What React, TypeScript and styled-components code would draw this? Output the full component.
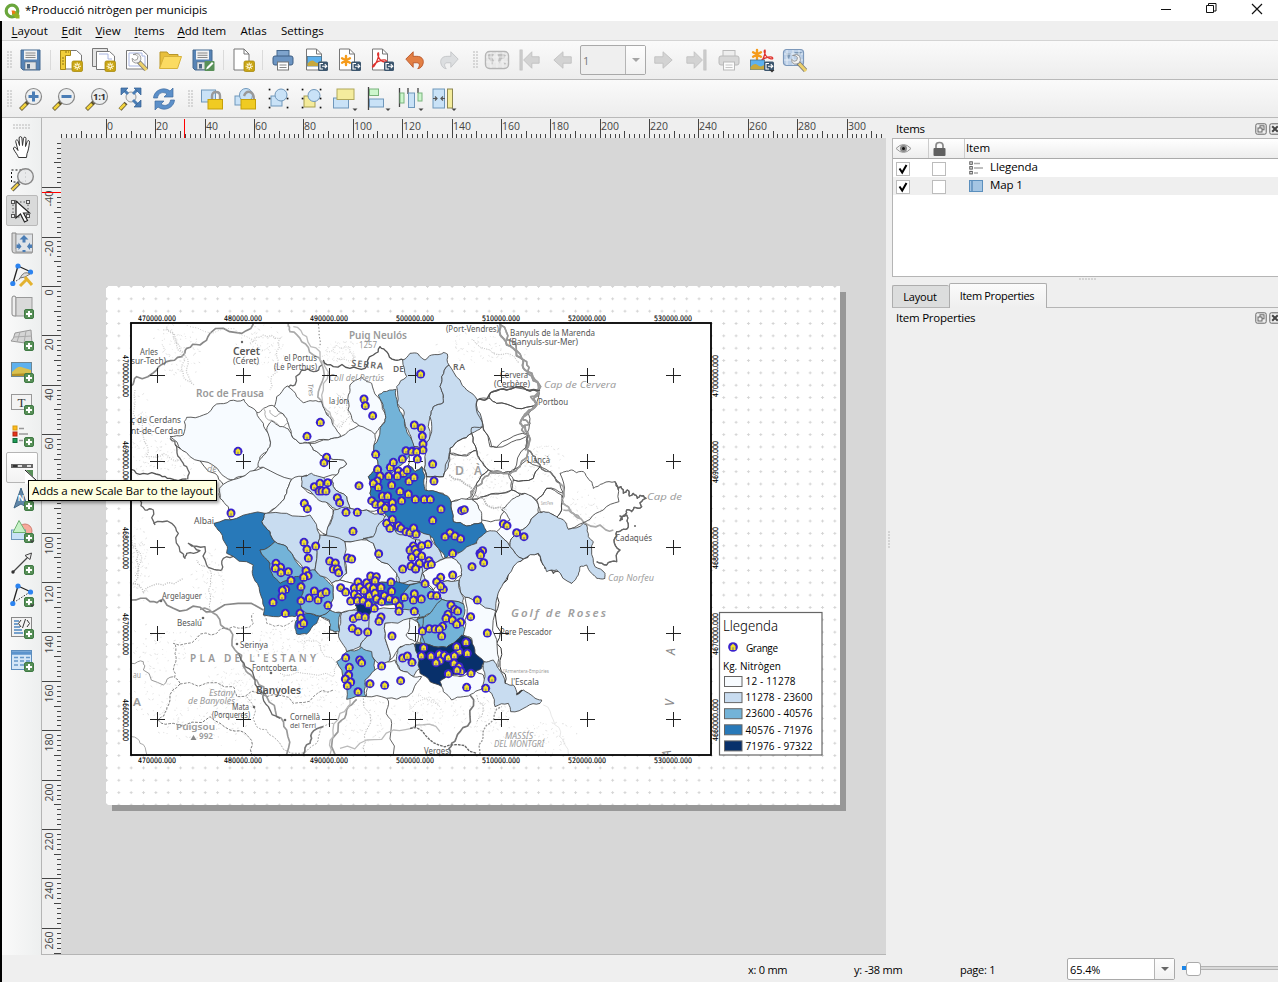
import React from 'react';
import styled, { createGlobalStyle, css } from 'styled-components';

const Global = createGlobalStyle`
  * { box-sizing: border-box; }
  html, body { margin: 0; padding: 0; }
  body { font-family: "Open Sans", "Noto Sans", sans-serif; font-size: 11.5px; color: #000; overflow: hidden; }
`;

/* ---------- shell ---------- */
const Window = styled.div`
  width: 1278px; height: 982px; display: flex; flex-direction: column;
  background: #efefef; border-left: 2px solid #000;
`;
const TitleBar = styled.header`
  height: 21px; flex: none; background: #fff; display: flex; align-items: center;
  margin-left: -2px; padding-left: 4px; gap: 5px;
`;
const Caption = styled.span<{ $sp?: number }>`
  white-space: nowrap; line-height: 14px; letter-spacing: ${p => p.$sp ?? 0}px;
`;
const TitleText = styled(Caption)`position: relative; top: -1px;`;
const WindowButtons = styled.div`
  margin-left: auto; display: flex; align-items: center; height: 18px; padding-right: 15px; gap: 34px;
  svg { display: block; position: relative; top: -2px; }
`;
const MenuBar = styled.nav`
  height: 20px; flex: none; display: flex; align-items: center; border-bottom: 1px solid #d4d4d4; padding-left: 9.5px;
`;
const MenuItem = styled.span<{ $w: number }>`
  width: ${p => p.$w}px; white-space: nowrap; line-height: 18px;
  u { text-underline-offset: 2px; }
`;
const ToolBar = styled.div<{ $h: number }>`
  height: ${p => p.$h}px; flex: none; display: flex; align-items: center; padding-left: 5px;
  background: linear-gradient(#fafafa, #ededed); border-bottom: 1px solid #b9b9b9;
`;
const dots = css`background-image: radial-gradient(circle at 1px 1px, #c6c6c6 0.6px, transparent .9px);`;
const Grip = styled.i<{ $gap?: number }>`
  width: 6px; height: 18px; margin-left: ${p => p.$gap ?? 0}px; margin-right: 1.5px; ${dots} background-size: 3px 3px;
`;
const ToolButton = styled.span<{ $disabled?: boolean }>`
  width: 33.15px; height: 30px; flex: none; display: flex; align-items: center; justify-content: center;
  ${p => p.$disabled && css`opacity: .78; filter: grayscale(1);`}
  svg { display: block; overflow: visible; }
`;
const Divider = styled.i`
  width: 1px; height: 20px; margin: 0 2.8px; background: #dadada; flex: none;
`;
const Combo = styled.div<{ $w: number; $h: number; $off?: boolean }>`
  width: ${p => p.$w}px; height: ${p => p.$h}px; flex: none; display: flex; border: 1px solid #a9a9a9; border-radius: 2px;
  background: ${p => (p.$off ? '#efefef' : '#fff')}; color: ${p => (p.$off ? '#777' : '#000')};
`;
const ComboText = styled.span`flex: 1; padding: 1px 0 0 2px; display: flex; align-items: center; letter-spacing: -.1px; font-size: 11px;`;
const ComboArrow = styled.span<{ $off?: boolean }>`
  width: 20px; border-left: 1px solid #b5b5b5; display: flex; align-items: center; justify-content: center;
  background: linear-gradient(#fdfdfd, #f1f1f1);
  &::after { content: ""; border: 4px solid transparent; border-top: 4px solid ${p => (p.$off ? '#a5a5a5' : '#666')}; border-bottom: 0; }
`;
const Main = styled.div`height: 837px; flex: none; display: flex;`;
const SideBar = styled.aside`
  width: 40px; flex: none; border-right: 1px solid #b5b5b5; background: linear-gradient(90deg, #fafafa, #edefef);
  display: flex; flex-direction: column; align-items: center; padding-top: 6px; position: relative;
`;
const SideGrip = styled.i`width: 17px; height: 6px; margin-bottom: .5px; ${dots} background-size: 3px 3px;`;
const SideButton = styled.span<{ $state?: 'on' | 'hover' }>`
  width: 32px; height: 31px; margin: .54px 0; flex: none; display: flex; align-items: center; justify-content: center; border-radius: 2px;
  border: 1px solid transparent;
  ${p => p.$state === 'on' && css`background: #d9dada; border-color: #b9b9b9;`}
  ${p => p.$state === 'hover' && css`background: linear-gradient(#fff, #f2f2f2); border-color: #b5b5b5;`}
  svg { display: block; overflow: visible; }
`;
const Tooltip = styled.div`
  position: absolute; left: 26px; top: 362px; width: 189px; height: 21px; z-index: 3; white-space: nowrap;
  border: 1px solid #000; background: #ffffe1; padding-left: 3px; line-height: 19px; letter-spacing: -.09px;
  box-shadow: 2px 2px 3px rgba(0,0,0,.4);
`;
const Work = styled.section`width: 844px; flex: none; display: flex; flex-direction: column; border-bottom: 1px solid #b5b5b5;`;
const WorkRow = styled.div`display: flex; svg { display: block; }`;
const Panel = styled.section`flex: 1; min-width: 0; display: flex;`;
const PaneHandle = styled.i`width: 3px; height: 17px; margin: 413px 0 0 2px; flex: none; ${dots} background-size: 3px 3px;`;
const PanelBody = styled.div`flex: 1; padding-left: 1px; display: flex; flex-direction: column; min-width: 0;`;
const DockTitle = styled.div<{ $h: number; $top?: number }>`
  height: ${p => p.$h}px; flex: none; display: flex; align-items: center; justify-content: space-between;
  padding: ${p => p.$top ?? 0}px 0 0 4px;
`;
const DockButtons = styled.span`display: flex; gap: 2px; margin-right: -3px; flex: none; svg { display: block; }`;
const Tree = styled.div`
  height: 139px; flex: none; border: 1px solid #b5b5b5; border-right: 0; background: #fff;
`;
const TreeRow = styled.div<{ $alt?: boolean; $head?: boolean }>`
  height: ${p => (p.$head ? 20 : 18)}px; display: flex; align-items: center;
  background: ${p => (p.$head ? 'linear-gradient(#fff, #ededed)' : p.$alt ? '#efefef' : '#fff')};
  ${p => p.$head && css`border-bottom: 1px solid #aaa;`}
`;
const Cell = styled.span<{ $w?: number; $line?: boolean; $pad: number }>`
  ${p => (p.$w ? `width: ${p.$w}px;` : 'flex: 1;')} height: 100%; padding-left: ${p => p.$pad}px; display: flex; align-items: center; gap: 7px;
  ${p => p.$line && css`border-right: 1px solid #ccc;`}
`;
const RowText = styled.span<{ $low?: boolean }>`line-height: 14px; padding-bottom: ${p => (p.$low ? 1 : 3)}px; letter-spacing: -.1px;`;
const Check = styled.span`
  width: 14px; height: 14px; border: 1px solid #bcbcbc; background: #fff; margin-top: 1px; svg { display: block; }
`;
const Splitter = styled.i`height: 5px; width: 17px; margin: 1px 0 0 187px; flex: none; ${dots} background-size: 3px 6px;`;
const Tabs = styled.div`height: 25px; display: flex; align-items: flex-end; border-bottom: 1px solid #b5b5b5; flex: none;`;
const Tab = styled.span<{ $on?: boolean; $w: number }>`
  width: ${p => p.$w}px; height: ${p => (p.$on ? 25 : 22)}px; line-height: ${p => (p.$on ? 24 : 21)}px; text-align: center;
  border: 1px solid #adadad; border-bottom: 0; border-radius: 2px 2px 0 0; margin-bottom: ${p => (p.$on ? -1 : 0)}px;
  background: ${p => (p.$on ? 'linear-gradient(#fbfbfb, #efefef)' : '#dcdddd')};
  font-size: 11px; letter-spacing: ${p => (p.$on ? -.33 : -.2)}px; padding-right: 2px; white-space: nowrap;
  ${p => !p.$on && css`border-right: 0;`}
`;
const Status = styled.footer`height: 27px; flex: none; display: flex; align-items: center; padding: 1px 0 0 746px;`;
const StatusText = styled.span<{ $w: number }>`width: ${p => p.$w}px; font-size: 11px; margin-top: 1px; letter-spacing: -.25px;`;
const Slider = styled.div`
  margin-left: 7px; margin-top: -2px; flex: 1; height: 4px; border: 1px solid #b3b3b3; border-right: 0; background: #d9d9d9; position: relative;
  &::before { content: ""; position: absolute; left: -1px; top: -1px; width: 8px; height: 4px; background: #1c86e8; }
  &::after { content: ""; position: absolute; left: 3px; top: -5px; width: 13px; height: 12px; border: 1px solid #aaa; border-radius: 3px; background: #fff; }
`;

/* ---------- icons ---------- */
const Svg = ({ s = 24, children }: { s?: number; children: React.ReactNode }) => (
  <svg width={s} height={s} viewBox="0 0 24 24" fill="none">{children}</svg>
);
const Plus = () => (
  <g><rect x="14.5" y="14.5" width="9" height="9" rx="1.5" fill="#589058" stroke="#3f7a44" /><path d="M19 16v6M16 19h6" stroke="#fff" strokeWidth="2" /></g>
);
const Gold = () => (
  <g><rect x="13" y="13" width="10.5" height="10.5" rx="1.5" fill="#c9a514" stroke="#a88a10" strokeWidth=".8" />
    <path d="M18.2 14.5v7.5M14.5 18.2h7.5M15.7 15.7l5 5M20.7 15.7l-5 5" stroke="#fff8d8" strokeWidth="1.1" /><circle cx="18.2" cy="18.2" r="1" fill="#c9a514" /></g>
);
const Export = () => (
  <g><rect x="14" y="13.5" width="10" height="9.5" rx="1.5" fill="#3c566e" /><path d="M19 15.5h-3v5.5h3M18 18.2h4.6M20.8 16.2l2 2-2 2" stroke="#fff" strokeWidth="1.1" /></g>
);
const Page = ({ x = 4 }: { x?: number }) => <g><path d={`M${x} 1h10l5 5v16h-15z`} fill="#fff" stroke="#777" /><path d={`M${x + 10} 1v5h5`} stroke="#777" /></g>;
const Floppy = ({ edit }: { edit?: boolean }) => (
  <Svg><path d="M2 2h19v20H4l-2-2z" fill="#5784b6" stroke="#44688f" /><rect x="5" y="2.500" width="13" height="9" fill="#f2f2f2" />
    <path d="M6.500 5h10M6.500 7.300h10M6.500 9.500h10" stroke="#888" /><rect x="6" y="14" width="11" height="7.500" fill="#dfe3e6" stroke="#5f6f80" strokeWidth=".6" /><rect x="8" y="16" width="3" height="4.500" fill="#4c6784" />
    {edit && <g><rect x="13.500" y="13" width="10" height="10" rx="1" fill="#589058" /><path d="M15 21.500l1-2.500 5-5 1.500 1.500-5 5z" fill="#fff" /></g>}</Svg>
);
const NewLayout = () => (
  <Svg><path d="M1.500 2.500h16l5 4.500v14h-21z" fill="#fff" stroke="#777" /><path d="M1.500 2.500h10v5h-5v14h-5z" fill="#f1ce3a" stroke="#a98a16" /><path d="M6 4h2M9 4h1M3 10h2M3 13h2M3 16h2" stroke="#8b7312" /><Gold /></Svg>
);
const Duplicate = () => (
  <Svg><path d="M0.500 .5h15v18h-15z" fill="#e4e4e4" stroke="#777" /><path d="M4.500 3.500h13l5 4.500v13.500h-18z" fill="#fff" stroke="#777" /><path d="M7 6h9v5h4" stroke="#a9b6e2" /><Gold /></Svg>
);
const Wrench = ({ x = 0, y = 0 }: { x?: number; y?: number }) => (
  <g transform={`translate(${x} ${y})`}><path d="M12 12l8 8.500" stroke="#777" strokeWidth="4.600" /><path d="M13.500 13.500l7 7.500" stroke="#ecd06a" strokeWidth="3" />
    <path d="M7 5.500l3 .2 2 2-.8 2.800-2.600.8-2.500-2q-.5 4 3 4.700 4.500.5 5.700-3.500.5-5-4-6z" fill="#f2f2f2" stroke="#888" strokeWidth=".8" /></g>
);
const Manager = () => (
  <Svg><path d="M1.500 2.500h16l5 4.500v14h-21z" fill="#fff" stroke="#777" /><path d="M4 5h13v3h3v10H4z" stroke="#a9b6e2" /><Wrench x={1} y={1} /></Svg>
);
const Folder = () => (
  <Svg><path d="M2 20V4h7l2 2.500h9V10" fill="#e8bf3b" stroke="#b8962a" /><path d="M1.500 20.500L6 8.500h17.500l-4 12z" fill="#fbdb62" stroke="#d7b23a" /></Svg>
);
const PageAdd = () => <Svg><Page x={3} /><Gold /></Svg>;
const Printer = ({ off }: { off?: boolean }) => (
  <Svg><rect x="6" y="2.500" width="12" height="6" fill={off ? '#ececec' : '#7ea3cc'} stroke={off ? '#aaa' : '#45688e'} /><rect x="2" y="8" width="20" height="9" rx="2" fill={off ? '#d0d0d0' : '#6c95c3'} stroke={off ? '#aaa' : '#3f5f84'} />
    <rect x="6.500" y="14" width="11" height="8" fill="#fff" stroke={off ? '#aaa' : '#777'} /><path d="M8.500 17h7M8.500 19.500h7" stroke={off ? '#bbb' : '#888'} /></Svg>
);
const Pic = ({ x = 2, y = 8 }: { x?: number; y?: number }) => (
  <g transform={`translate(${x} ${y})`}><rect width="14" height="9.500" fill="#5db1ee" stroke="#46708c" strokeWidth=".8" /><path d="M0 7q4-5 7-2t7-.5v5H0z" fill="#c7a83c" /></g>
);
const Flower = ({ x = 8.5, y = 12, r = 5 }: { x?: number; y?: number; r?: number }) => (
  <g transform={`translate(${x} ${y})`} stroke="#f59b1b" strokeWidth="2.400" strokeLinecap="round"><path d={`M0 -${r}V${r}M-${r * .87} -${r * .5}L${r * .87} ${r * .5}M${r * .87} -${r * .5}L-${r * .87} ${r * .5}`} /></g>
);
const ExportImage = () => <Svg><Page x={2.5} /><Pic x={3.500} y={8.500} /><Export /></Svg>;
const ExportSvg = () => <Svg><Page x={2.5} /><Flower x={9} y={12.500} r={4.5} /><Export /></Svg>;
const pdf = 'M10 5c-2 0 0 5 2 7s7 3 6 1-8-1-12 3-1 4 1 0 4-8 3-11z';
const ExportPdf = () => <Svg><Page x={2.5} /><g transform="translate(-1.500 0)"><path d={pdf} stroke="#e0322d" strokeWidth="1.300" /></g><Export /></Svg>;
const undoPath = 'M2 11L10 3v5h4c5.500 0 7.500 3.500 7 7-.5 4-3.500 6.500-6 6.500 2.500-3 2.500-6.500-1-6.500h-4v5z';
const Undo = () => <Svg s={22}><path d={undoPath} fill="#e27f44" stroke="#b9562a" /></Svg>;
const Redo = () => <Svg s={22}><g transform="matrix(-1 0 0 1 24 0)"><path d={undoPath} fill="#dcdee0" stroke="#c3c5c7" /></g></Svg>;
const AtlasMap = () => (
  <Svg><rect x=".5" y="3.500" width="23" height="17" rx="4" fill="#e6e6e6" stroke="#a4a4a4" strokeWidth="1.400" />
    <path d="M3 6.500c2-1 5-1 6 0l-2 3 2 3-2 4.500-2-5-2-2zM12 6.500c3-1 7-1 9 1l-2 3-3 1-1 4-2-2 1-4zM18 14l3 1-1 2z" fill="#b0b0b0" /><path d="M6 4v16M12 4v16M18 4v16M1 9h22M1 14h22" stroke="#f4f4f4" strokeWidth=".8" /></Svg>
);
const Arrow = ({ flip, bar }: { flip?: boolean; bar?: boolean }) => (
  <Svg s={22}><g transform={flip ? 'matrix(-1 0 0 1 24 0)' : undefined}>{bar && <rect x="1" y="1" width="2.500" height="22" fill="#c0c3c5" stroke="#b0b3b6" strokeWidth=".8" />}
    <path d={bar ? 'M5 12l9-9v5.500h8v7h-8V21z' : 'M2 12l10-9v5.500h9v7h-9V21z'} fill="#c9cccd" stroke="#b0b3b6" /></g></Svg>
);
const ExportAtlas = () => <Svg><Flower x={7} y={6.500} r={4.500} /><g transform="translate(5.500 -2.500) scale(.95)"><path d={pdf} stroke="#e0322d" strokeWidth="1.400" /></g><Pic x={.5} y={12} /><Export /><path d="M19.500 22h5l-2.500 2.500z" fill="#333" /></Svg>;
const AtlasSettings = () => (
  <Svg><rect x=".5" y="1.500" width="20" height="16" rx="3" fill="#bcd0e8" stroke="#7c98ba" strokeWidth="1.200" /><path d="M3 5h5l-2 6-2-2zM11 4h8l-3 5z" fill="#7e99b6" /><path d="M4 2v15M10 2v15M16 2v15M1 6h19M1 12h19" stroke="#eef4fa" strokeWidth=".8" /><Wrench x={2.500} y={2} /></Svg>
);
const Lens = ({ children }: { children?: React.ReactNode }) => (
  <Svg><path d="M9 15L1.500 22.500" stroke="#5c5230" strokeWidth="4" /><path d="M7 17l-5 5" stroke="#f2d33c" strokeWidth="2.600" /><circle cx="14.500" cy="9.500" r="8" fill="#eceeef" fillOpacity=".92" stroke="#888" strokeWidth="1.200" />{children}</Svg>
);
const ZoomIn = () => <Lens><path d="M14.500 4.500v10M9.500 9.500h10" stroke="#4a7db5" strokeWidth="3" /></Lens>;
const ZoomOut = () => <Lens><path d="M9.500 9.500h10" stroke="#4a7db5" strokeWidth="3" /></Lens>;
const ZoomOne = () => <Lens><text x="14.500" y="13" fontSize="9.500" fontWeight="700" textAnchor="middle" fill="#333" textLength="13">1:1</text></Lens>;
const ZoomFull = () => (
  <Svg><path d="M8 16l-6 6.500" stroke="#5c5230" strokeWidth="4" /><path d="M7 17l-5 5" stroke="#f2d33c" strokeWidth="2.600" /><circle cx="13" cy="10" r="5" fill="#eee" stroke="#999" />
    <path d="M5 2l5 5M20 2l-5 5M20 18l-5-5" stroke="#4a7db5" strokeWidth="3" /><path d="M3 1h7L3 8zM23 1h-7l7 7zM23 20h-7l7-7z" fill="#4a7db5" stroke="#335f8f" strokeWidth=".7" /></Svg>
);
const Refresh = () => (
  <Svg><path d="M1.500 11C2 3 12-1 18 4l3-3v9h-9l3-3C11 4 6 6 5.500 11z" fill="#5b8fc9" stroke="#3f6c9f" strokeWidth=".7" /><path d="M22.500 13c-.5 8-10.500 12-16.500 7l-3 3v-9h9l-3 3c4 3 9 1 9.500-4z" fill="#5b8fc9" stroke="#3f6c9f" strokeWidth=".7" /></Svg>
);
const Lock = ({ open }: { open?: boolean }) => (
  <Svg>{open ? <g><rect x="2" y="9" width="12" height="9" fill="#c9e2f7" stroke="#6f97bb" /><circle cx="13" cy="8" r="6.500" fill="#c9e2f7" stroke="#6f97bb" /></g> : <rect x="1.500" y="3" width="14" height="12" fill="#c9e2f7" stroke="#6f97bb" />}
    <path d={open ? 'M11 9q2-5 6-4t4 8' : 'M12 13V9q0-4 4-4t4 4v4'} stroke="#999" strokeWidth="2.400" /><rect x="8" y="12.500" width="14.500" height="9.500" fill="#f0cb22" stroke="#c59f0b" /></Svg>
);
const Corners = () => <g fill="#111">{[[1, 1], [19, 1], [1, 19], [19, 19], [1, 10], [19, 10]].map(([x, y]) => <rect key={`${x}-${y}`} x={x + .7} y={y + .7} width="1.700" height="1.700" />)}</g>;
const Group = () => <Svg><rect x="4" y="9" width="11" height="10" fill="#c9e2f7" stroke="#6f97bb" /><circle cx="14" cy="8" r="6" fill="#c9e2f7" stroke="#6f97bb" /><Corners /></Svg>;
const Ungroup = () => <Svg><rect x="4" y="9" width="11" height="11" fill="#f4eb9a" stroke="#a79e50" /><circle cx="14" cy="8.500" r="6" fill="#c9e2f7" stroke="#6f97bb" /><Corners /></Svg>;
const Caret = () => <path d="M19.500 21.500h5l-2.500 2.500z" fill="#444" />;
const Raise = () => <Svg><rect x=".5" y="11" width="15" height="10" fill="#c9e2f7" stroke="#6f97bb" /><rect x="4" y="2" width="17" height="10.500" fill="#f4ec9d" stroke="#b0a75a" /><Caret /></Svg>;
const Align = () => <Svg><path d="M2.500 0v23" stroke="#444" strokeWidth="1.300" /><rect x="3.500" y="2" width="9" height="6.500" fill="#cdf6cd" stroke="#79b37c" /><rect x="3.500" y="12" width="14" height="8" fill="#c9e2f7" stroke="#6f97bb" /><Caret /></Svg>;
const Distribute = () => <Svg><path d="M.5 1v19M9 1v6M19 1v5" stroke="#444" strokeWidth="1.300" /><rect x="1" y="6" width="4" height="10" fill="#cdf6cd" stroke="#79b37c" /><rect x="9.500" y="6" width="6" height="14.500" fill="#c9e2f7" stroke="#6f97bb" /><rect x="19" y="6" width="4" height="8" fill="#cdf6cd" stroke="#79b37c" /><Caret /></Svg>;
const Resize = () => <Svg><rect x="1" y="2" width="11.500" height="19" fill="#c9e2f7" stroke="#6f97bb" /><path d="M1 11.500h4M13 11.500H9M3 9.500l2 2-2 2M11 9.500l-2 2 2 2" stroke="#555" strokeWidth="1.200" /><rect x="15.500" y="2" width="5" height="19" fill="#f4ec9d" stroke="#8c8650" /><Caret /></Svg>;

const Hand = () => (
  <Svg><path d="M8 23c-1-3-3.500-5.500-5-8.500-.5-2 1.500-2.500 2.700-.8L7.500 16 5.200 7c-.3-1.800 1.900-2.200 2.500-.4L9 11 8.600 3.500c0-1.800 2.500-1.900 2.800 0L12 11l1-7.200c.3-1.700 2.600-1.500 2.500.3L15 12l1.700-5c.6-1.600 2.600-1 2.300.7-.5 4-1 8-2.500 11.500L16 23z" fill="#fff" stroke="#333" strokeWidth="1" transform="translate(.5 -.5)" /></Svg>
);
const ZoomTool = () => (
  <Svg><rect x="1.500" y="3" width="14" height="12" stroke="#111" strokeDasharray="2 2" /><path d="M9 16l-7 7" stroke="#555" strokeWidth="4" /><path d="M8 17l-6 6" stroke="#f0cf49" strokeWidth="2.400" /><circle cx="15.500" cy="9.500" r="7.800" fill="#e8e9ea" fillOpacity=".9" stroke="#888" strokeWidth="1.400" /></Svg>
);
const Select = () => (
  <Svg><rect x="3" y="3" width="15" height="15" stroke="#555" strokeDasharray="1.500 2" /><g stroke="#555" fill="#eee"><rect x="1.500" y="1.500" width="3" height="3" /><rect x="16.500" y="1.500" width="3" height="3" /><rect x="1.500" y="15.500" width="3" height="3" /><rect x="16.500" y="15.500" width="3" height="3" /></g>
    <path d="M6 2v17l4.500-4 4 8 3-1.500-4-7.500h6z" fill="#fff" stroke="#222" strokeWidth="1.200" /></Svg>
);
const MoveContent = () => (
  <Svg><path d="M2 2h4v16h16v4H4q-2 0-2-3z" fill="#d7d7d7" stroke="#888" /><rect x="6" y="3" width="16.500" height="18" fill="#dfe3e7" stroke="#999" /><path d="M14 4l4.500 4.500h-3v3h-3v-3h-3zM6.500 13.500h2v-2l3 4-3 3.500v-2h-2zM22 13.500h-2v-2l-3 4 3 3.500v-2h2zM12.500 21v-2h3v2z" fill="#4a7db5" /></Svg>
);
const nodes = (
  <g><path d="M8 3L3 20M8 3l12 5.500" stroke="#222" strokeWidth="1.300" /><path d="M20 9L3 20" stroke="#333" strokeDasharray="1.500 1.500" /><g fill="#2d84f0"><circle cx="8" cy="3" r="2.600" /><circle cx="20.500" cy="9" r="2.600" /><circle cx="2.800" cy="20.500" r="2.600" /></g></g>
);
const EditNodes = () => <Svg>{nodes}<path d="M10 15q4-8 10-4l-5 3z" fill="#ddd" stroke="#777" /><path d="M15 14l7 8M17 16l-7 7" stroke="#e3b22f" strokeWidth="3" /></Svg>;
const AddMap = () => <Svg><path d="M2 3q0-2 2-2t2 2v18H4q-2 0-2-2z" fill="#eee" stroke="#888" /><rect x="6" y="2.500" width="16" height="18.500" fill="#d9d9d9" stroke="#999" /><Plus /></Svg>;
const Add3d = () => <Svg><path d="M5 6l16-3 1 14-21-3q3-2 4-8z" fill="#d5d5d5" stroke="#999" /><path d="M10 5l-3 10M16 4l-2 12M4 10l18-1" stroke="#aaa" /><Plus /></Svg>;
const AddPicture = () => <Svg><rect x="1.500" y="3.500" width="20" height="14" fill="#5db1ee" stroke="#6d8794" /><path d="M2 13q6-6 9-5t10 3v6H2z" fill="#d9c04e" /><path d="M2 15l19-1v3H2z" fill="#b29126" /><Plus /></Svg>;
const AddLabel = () => <Svg><rect x="1.500" y="3.500" width="20" height="15" fill="#f3f3f3" stroke="#999" /><text x="11.500" y="15.500" textAnchor="middle" fontFamily="Liberation Serif, serif" fontSize="13" fill="#333">T</text><Plus /></Svg>;
const AddLegend = () => <Svg><rect x="3" y="3" width="4" height="4" fill="#fdbb1c" stroke="#d89c10" /><rect x="3" y="9" width="4" height="4" fill="#e7341c" stroke="#b1260f" /><rect x="3" y="15.500" width="4" height="4" fill="#1f9b56" stroke="#116b38" /><path d="M9 5.500h5M9 11h9M9 17.500h4" stroke="#999" strokeWidth="1.600" /><Plus /></Svg>;
const AddScale = () => <Svg><rect x="1" y="9" width="22" height="4" fill="#666" /><rect x="3" y="10" width="4" height="2" fill="#333" /><rect x="8" y="10" width="4" height="2" fill="#ddd" /><rect x="17" y="10" width="4" height="2" fill="#ddd" /><path d="M16 15h7v7z" fill="#589058" /><path d="M15 15v14l14-2z" fill="#fff" /><path d="M15 15l12 11" stroke="#111" /></Svg>;
const AddNorth = () => <Svg><path d="M11 1l7 20-7-4-7 4z" fill="#5f86a8" stroke="#426785" /><text x="11" y="14" fontSize="8" fontWeight="700" fill="#fff" textAnchor="middle">N</text><Plus /></Svg>;
const AddShape = () => <Svg><circle cx="15" cy="12" r="7" fill="#f7a99b" stroke="#cf7f73" /><rect x="1.500" y="11" width="14" height="9.500" fill="#c9e2f7" stroke="#6f97bb" /><path d="M9 1.500l7 12H3z" fill="#c6f2c6" stroke="#6eb072" /><Plus /><Caret /></Svg>;
const AddArrow = () => <Svg><path d="M3 21L18 6" stroke="#444" strokeWidth="1.200" /><path d="M21.500 2l-1.500 6.500-5-4z" fill="#eee" stroke="#444" /><circle cx="3" cy="21" r="1.700" fill="#333" /><Plus /></Svg>;
const AddNode = () => <Svg>{nodes}<Plus /><Caret /></Svg>;
const AddHtml = () => <Svg><rect x="1.500" y="2.500" width="20" height="19" fill="#f3f3f3" stroke="#888" /><path d="M4 6h5M4 9h4M4 12h6M4 15h8M4 18h9" stroke="#4d86c0" strokeWidth="1.500" /><path d="M11 5L8.500 8.500 11 12M17 5l2.500 3.500L17 12M15.500 4l-3 9" stroke="#333" /><Plus /></Svg>;
const AddTable = () => <Svg><rect x="1.500" y="2.500" width="20" height="19" fill="#d4e6f7" stroke="#5c8dbd" /><path d="M2 5h19" stroke="#5b93cc" strokeWidth="3.500" /><path d="M4 9.500h4M10 9.500h4M16 9.500h4M4 13h4M10 13h4M16 13h4M4 17h4M10 17h4" stroke="#6498c9" strokeWidth="1.500" /><Plus /></Svg>;

const Logo = () => (
  <svg width="16" height="16" viewBox="0 0 16 16"><circle cx="8" cy="8" r="5.800" fill="none" stroke="#6aa63c" strokeWidth="3.200" /><path d="M8 8h3.500l4 4v3.500H12L8 11.500z" fill="#93b023" /><path d="M7.500 7.500h3l1 3-3 .5z" fill="#ee7913" /></svg>
);

/* ---------- rulers ---------- */
const MM = 2.469;
const range = (a: number, b: number, s: number) => { const r: number[] = []; for (let i = a; i <= b; i += s) r.push(i); return r; };

const HRuler = () => (
  <svg width="844" height="20" viewBox="42 118 844 20" shapeRendering="crispEdges">
    <rect x="42" y="118" width="844" height="20" fill="#efefef" />
    {range(-18, 314, 2).map(v => {
      const x = Math.floor(106.4 + v * MM);
      const top = v % 20 === 0 ? 119 : v % 10 === 0 ? 131 : 134;
      return <rect key={v} x={x} y={top} width="1" height={138 - top} fill="#444" />;
    })}
    {range(0, 300, 20).map(v => (
      <text key={v} x={Math.floor(106.4 + v * MM) + 1} y="130" fontSize="11.500" fill="#444" textLength={String(v).length * 6} lengthAdjust="spacingAndGlyphs">{v}</text>
    ))}
    <rect x="184" y="119" width="1" height="19" fill="#f00" />
  </svg>
);
const VRuler = () => (
  <svg width="19" height="816" viewBox="42 138 19 816" shapeRendering="crispEdges">
    <rect x="42" y="138" width="19" height="816" fill="#efefef" />
    {range(-58, 270, 2).map(v => {
      const y = Math.floor(286.4 + v * MM);
      const left = v % 20 === 0 ? 42 : v % 10 === 0 ? 54 : 57;
      return <rect key={v} x={left} y={y} width={61 - left} height="1" fill="#444" />;
    })}
    {range(-40, 260, 20).map(v => (
      <text key={v} transform={`translate(53 ${Math.floor(286.4 + v * MM) + 3.500}) rotate(-90)`} textAnchor="end" fontSize="11.500" fill="#444"
        textLength={String(Math.abs(v)).length * 6 + (v < 0 ? 4 : 0)} lengthAdjust="spacingAndGlyphs">{v}</text>
    ))}
    <rect x="42" y="192" width="19" height="1" fill="#f00" />
  </svg>
);

/* ---------- map ---------- */
type Sheet = 'nw' | 'ne' | 'sw' | 'se';
const origin: Record<Sheet, [number, number]> = { nw: [0, 0], ne: [870, 0], sw: [0, 690], se: [870, 690] };
const shades = ['#f7fbff', '#c8dcf0', '#73b3d8', '#2879b9', '#08306b', '#ffffff'];

const parse = (sheet: Sheet, s: string): [number, number][] =>
  s.split(' ').map(p => { const [x, y] = p.split(',').map(Number); return [x + origin[sheet][0], y + origin[sheet][1]]; });

/* Splits every edge in two with a small repeatable offset, so that shared borders stay shared. */
const rough = (pts: [number, number][], closed: boolean, amp: number): [number, number][] => {
  const out: [number, number][] = [];
  pts.forEach((a, i) => {
    out.push(a);
    const b = pts[i + 1] ?? (closed ? pts[0] : null);
    if (!b) return;
    const flip = a[0] > b[0] ? -1 : 1;
    const h = Math.sin((a[0] + b[0]) * 12.9 + (a[1] + b[1]) * 78.2) * amp * flip;
    out.push([(a[0] + b[0]) / 2 - (b[1] - a[1]) * h, (a[1] + b[1]) / 2 + (b[0] - a[0]) * h]);
  });
  return out;
};
const shape = (sheet: Sheet, s: string, closed: boolean, amp = .1) =>
  'M' + rough(rough(parse(sheet, s), closed, amp), closed, amp).map(p => `${p[0].toFixed(1)},${p[1].toFixed(1)}`).join('L') + (closed ? 'Z' : '');

const areas: [Sheet, number, string][] = [
  ['nw', 0, '193,425 200,412 250,405 290,372 330,362 372,358 385,378 410,397 430,430 445,460 450,500 440,515 420,530 415,560 400,572 380,585 340,600 310,588 285,560 240,543 185,510 150,470 190,465'],
  ['nw', 0, '455,423 480,440 505,447 520,475 540,490 570,490 580,510 610,530 670,540 680,552 660,565 650,585 600,598 540,600 515,598 470,590 440,570 430,562 415,560 418,540 440,515 450,500 440,450'],
  ['nw', 0, '502,318 470,350 463,380 490,402 505,430 520,475 540,490 570,487 625,480 662,470 650,450 635,420 612,385 605,365 570,362 550,368 530,350'],
  ['nw', 0, '725,290 690,315 685,345 684,390 700,425 715,435 740,455 765,463 775,450 795,425 795,400 785,370 772,350 755,310 740,305'],
  ['nw', 0, '570,490 625,480 662,470 715,437 765,463 762,495 775,560 745,590 750,640 785,690 740,690 690,685 680,650 640,620 635,600 650,585 660,565 680,552 670,540 610,530 580,510'],
  ['nw', 0, '298,625 355,595 430,562 515,598 500,640 480,670 430,705 380,712 330,718 325,680 300,655'],
  ['nw', 0, '515,598 560,585 545,620 570,640 600,655 640,690 635,715 620,765 575,740 500,708 435,702 480,670 500,640'],
  ['nw', 1, '545,590 575,580 600,590 635,600 640,620 680,650 690,685 650,690 625,670 590,655 545,620'],
  ['nw', 1, '640,690 690,685 740,690 790,705 815,740 825,780 780,785 755,770 675,785 610,765 620,765 635,720'],
  ['nw', 1, '848,240 870,220 895,222 915,240 935,225 972,217 982,222 987,255 965,290 960,320 970,345 970,368 940,380 930,410 930,470 915,500 882,500 868,460 850,415 850,390 832,370 830,320 860,290'],
  ['ne', 1, '117,255 150,300 170,330 202,360 202,390 217,440 185,460 150,480 120,505 118,520 115,560 100,590 50,590 45,540 45,500 60,470 60,410 70,380 100,368 100,345 90,320 95,290'],
  ['nw', 0, '882,500 915,500 915,540 920,590 905,560 885,575 865,555 870,520'],
  ['nw', 2, '775,345 790,335 828,328 832,370 845,400 855,440 870,470 882,500 870,520 835,560 815,580 790,590 775,560 762,495 780,450 795,425 795,400 785,365'],
  ['ne', 5, '202,360 240,355 260,370 320,385 380,375 355,400 350,462 300,475 260,502 245,500 220,450 202,400'],
  ['ne', 5, '240,355 240,340 260,330 330,325 385,330 380,375 320,385 260,370'],
  ['ne', 5, '185,443 217,440 240,500 260,502 320,480 355,462 350,500 310,575 280,580 240,572 210,540 200,510 185,460'],
  ['ne', 5, '120,505 150,480 185,460 200,510 170,525 140,525 120,520'],
  ['ne', 5, '118,520 170,528 200,512 210,540 235,570 200,610 185,650 150,660 125,665 100,640 50,635 50,590 100,590'],
  ['ne', 5, '235,570 295,580 305,630 270,640 220,650 185,658 200,610'],
  ['ne', 5, '295,580 350,540 390,560 370,595 310,600'],
  ['ne', 5, '305,630 310,600 370,595 390,560 450,610 460,640 410,625 380,660 345,640'],
  ['ne', 5, '185,658 220,650 305,630 330,645 295,680 270,720 215,720 205,680'],
  ['ne', 5, '380,660 410,625 455,645 455,690 440,712 390,695'],
  ['ne', 5, '450,580 465,575 485,570 500,578 520,575 530,590 545,605 550,625 565,618 580,610 615,605 627,665 580,690 540,718 475,748 440,712 455,690 460,640'],
  ['ne', 0, '125,665 185,658 205,680 215,700 215,728 170,738 130,725 125,690'],
  ['ne', 3, '-125,590 -108,568 -70,590 -35,590 -5,555 15,575 35,560 45,590 45,630 90,640 115,650 125,690 130,725 170,738 215,728 230,760 205,785 180,805 130,822 105,835 85,805 70,775 20,760 -10,745 -30,740 -40,790 -55,735 -70,715 -85,690 -110,665 -120,640'],
  ['se', 0, '260,65 300,30 275,0 295,-20 320,-40 345,-50 380,-25 385,8 350,50 305,85 300,110'],
  ['se', 1, '385,8 350,50 305,85 300,110 340,147 385,130 400,165 410,185 440,180 485,220 505,195 510,170 530,165 545,190 560,205 585,205 585,190 555,170 545,120 550,95 535,80 530,45 520,40 475,58 460,30 430,15 400,5'],
  ['se', 1, '240,62 260,65 300,110 340,147 310,170 280,220 262,260 257,302 235,300 200,275 165,262 150,240 148,215 155,195 150,165 125,145 145,130 200,100 205,85'],
  ['se', 1, '-80,70 -10,60 60,75 85,115 100,145 125,145 60,165 38,190 45,215 10,225 -50,220 -70,150'],
  ['se', 0, '60,165 125,143 152,165 155,195 130,215 100,215 70,240 50,215 38,190'],
  ['se', 1, '100,215 148,210 150,240 160,262 160,282 95,268 85,245'],
  ['sw', 1, '435,10 500,10 570,15 600,75 590,110 585,180 550,180 520,140 500,110 465,95 450,65 425,35'],
  ['sw', 3, '282,40 350,25 435,10 425,35 450,65 465,95 420,120 450,160 465,200 510,205 525,195 550,195 550,230 545,290 525,320 490,315 430,315 428,270 412,220 397,190 400,165 320,130 322,110 300,65'],
  ['sw', 2, '420,120 465,95 500,110 520,140 555,180 585,180 610,200 640,230 630,300 600,320 560,310 545,300 550,230 545,195 525,200 480,220 460,200 450,160'],
  ['sw', 3, '530,330 560,310 600,318 590,340 560,372 530,372 525,355'],
  ['sw', 2, '600,318 630,300 662,308 660,365 630,360 628,330'],
  ['sw', 1, '600,75 675,95 680,130 680,190 660,210 635,220 610,200 585,180 590,110'],
  ['sw', 0, '675,95 740,90 760,100 770,145 830,190 830,215 740,215 660,210 680,190'],
  ['sw', 1, '730,85 760,80 790,30 800,15 830,70 870,80 900,90 900,215 840,220 830,190 770,145 760,100'],
  ['sw', 0, '635,220 660,210 740,215 715,290 665,308 630,300 640,230'],
  ['sw', 3, '740,215 830,215 900,220 910,290 840,290 760,280 720,270'],
  ['se', 2, '0,225 50,222 70,240 85,262 95,268 90,285 60,310 20,325 0,330 -30,300 -20,250'],
  ['se', 2, '95,268 160,282 165,300 160,350 170,375 150,380 130,400 110,412 60,405 30,395 20,330 60,310 75,290'],
  ['sw', 1, '665,308 712,300 750,315 745,370 720,410 680,425 660,390 658,350'],
  ['sw', 1, '750,300 830,295 880,300 900,315 890,330 840,340 795,340 800,400 810,450 780,470 765,450 740,430 720,410 745,370'],
  ['sw', 0, '795,340 870,325 895,340 890,400 840,410 810,450 800,400'],
  ['sw', 5, '870,325 910,320 915,400 885,395 858,375'],
  ['sw', 4, '705,285 740,275 770,290 745,315 712,305'],
  ['sw', 1, '835,415 880,400 895,420 905,470 880,500 840,480 830,440'],
  ['sw', 2, '650,455 680,425 725,412 755,425 765,480 735,520 738,560 680,568 670,510'],
  ['sw', 0, '735,510 765,480 780,470 825,450 840,480 880,500 905,500 880,540 860,560 800,565 740,560'],
  ['se', 0, '165,262 200,275 257,302 262,420 265,470 240,478 200,455 195,430 185,385 160,375 165,330'],
  ['se', 4, '15,402 60,405 110,412 130,400 155,375 185,390 195,430 222,455 215,475 190,490 150,490 115,495 95,530 60,515 30,490 25,440'],
  ['se', 0, '90,515 115,495 150,500 200,485 220,495 225,535 190,550 160,560 125,570 100,545'],
  ['se', 1, '222,455 250,450 265,475 285,520 310,525 320,555 340,540 370,560 395,570 390,580 350,590 302,605 295,580 255,590 245,550 215,530 225,500'],
];

/* sheet, stroke, width, dash, points */
const lines: [Sheet, string, number, string, string][] = [
  ['nw', '#888', 5, '', '32,318 50,290 110,270 140,245 185,230 200,205 240,195 270,160 350,158 400,132'],
  ['nw', '#aaa', 5, '', '505,129 510,155 545,185 580,225 605,250 600,320 608,380 625,430 640,465'],
  ['nw', '#bbb', 4, '', '520,140 560,170 600,215 615,260 610,330 620,390 640,430'],
  ['nw', '#555', 4, '', '610,240 640,260 690,265 735,265 760,225 780,200 800,215 825,240 850,240'],
  ['nw', '#777', 3, '4 6', '595,132 600,200'],
  ['nw', '#666', 4, '', '500,320 525,315 545,270 580,275 605,255'],
  ['nw', '#666', 3, '', '410,397 430,385 465,380 490,350'],
  ['nw', '#aaa', 3, '', '430,385 445,420 480,445 505,430 490,402 465,410 450,390'],
  ['nw', '#666', 4, '', '150,475 170,500 180,535 200,560 203,598'],
  ['nw', '#555', 4, '', '32,568 70,580 120,585 150,595 200,597'],
  ['nw', '#555', 3, '', '165,495 220,535 285,580 310,615 330,640'],
  ['nw', '#ccc', 4, '3 4', '140,140 165,165 170,200 195,240 190,290 215,310'],
  ['nw', '#ccc', 4, '3 4', '130,150 160,160 180,210 205,250 210,300 225,315'],
  ['nw', '#ccc', 4, '3 4', '390,190 430,165 480,175 470,230 465,280 450,330'],
  ['nw', '#ccc', 3, '3 4', '620,215 650,195 690,200 700,240 650,235'],
  ['nw', '#ccc', 4, '3 4', '45,330 40,400 70,470 80,530 130,520 180,540'],
  ['nw', '#bbb', 3, '3 4', '640,430 665,440 690,410 680,380 650,340'],
  ['nw', '#ccc', 3, '3 5', '210,140 300,150 380,170 420,210 460,190'],
  ['nw', '#666', 4, '', '60,660 75,690 100,690 105,735'],
  ['nw', '#888', 3, '', '296,640 310,665 325,665 325,690'],
  ['sw', '#666', 4, '', '100,40 155,40 175,70 180,125 195,145 200,130 240,122 205,100 255,110 260,165 290,180 305,180 310,145 350,140'],
  ['sw', '#bbb', 4, '3 4', '35,90 50,150 40,220 70,250 130,225 190,205'],
  ['sw', '#bbb', 3, '3 4', '45,100 60,160 45,200'],
  ['sw', '#888', 5, '', '32,270 90,275 130,268 200,300 280,305 430,300'],
  ['sw', '#999', 5, '', '240,298 290,315 330,360 345,420 370,460 385,490 410,510 440,560 470,620 500,660 500,733'],
  ['sw', '#666', 4, '', '355,430 375,470 405,510 430,550 445,590 480,625'],
  ['sw', '#888', 3, '8 4', '180,520 160,480 165,430 160,400 230,385 290,370 340,350 400,340 400,310'],
  ['sw', '#888', 3, '8 4', '180,522 290,518 340,530 350,560 440,560 520,580 580,560 640,540'],
  ['sw', '#999', 3, '', '35,460 70,455 70,480 130,525 160,500'],
  ['sw', '#777', 3, '8 4', '180,522 150,570 140,600 115,630 160,640 270,620 330,660 385,680 395,733'],
  ['sw', '#999', 5, '', '710,568 680,600 655,640 645,733'],
  ['sw', '#bbb', 4, '', '690,568 660,610 640,680 630,733'],
  ['sw', '#666', 3, '', '800,565 800,600 815,640 820,733'],
  ['sw', '#bbb', 3, '5 4', '730,565 740,660 735,730'],
  ['sw', '#aaa', 3, '6 4', '380,560 410,650 460,680 540,730 590,700 600,660 640,640'],
  ['sw', '#777', 5, '', '550,733 570,700 575,670 610,650'],
  ['sw', '#bbb', 4, '', '660,715 740,690 820,660 890,645 960,665'],
  ['sw', '#bbb', 3, '4 4', '270,300 265,240 270,180 230,150'],
  ['sw', '#999', 3, '8 4', '430,315 440,340 490,350 525,330'],
  ['sw', '#bbb', 3, '3 4', '480,490 550,490 640,500 650,460 600,400 550,395'],
  ['sw', '#777', 3, '', '600,318 640,365 658,370'],
  ['sw', '#aaa', 3, '', '35,680 60,700 80,733'],
  ['ne', '#999', 6, '', '270,129 280,175 310,205 340,240 345,270 375,300 385,330 370,360 380,375 355,400 330,430 345,440 355,465 345,510'],
  ['ne', '#999', 5, '', '272,135 290,180 318,195 350,245 352,280 392,320 362,350 378,372 350,398 340,420 360,430 335,450 358,470'],
  ['ne', '#777', 4, '', '355,465 348,500 365,520 380,545 420,575 450,610'],
  ['ne', '#999', 5, '', '180,655 195,620 225,590 260,575 300,582 330,560 350,500'],
  ['ne', '#bbb', 5, '4 3', '118,585 180,620 220,655 290,690'],
  ['ne', '#ccc', 3, '3 4', '190,180 240,210 290,220 330,250'],
  ['ne', '#aaa', 5, '', '450,610 455,660 480,690 510,715'],
  ['ne', '#555', 4, '', '202,360 230,358 250,335 290,330 350,330 390,330'],
  ['ne', '#666', 4, '', '615,605 625,628 633,620 640,640 652,630 658,648 670,640 682,655 690,646 708,655 690,668 695,680 672,682 665,695 650,690 645,705 630,708 637,718 630,722 650,705 655,740 635,750 620,755 612,780 630,810 620,845 590,855 560,845'],
  ['se', '#aaa', 5, '', '460,0 490,10 520,35 570,45 610,60'],
  ['se', '#555', 4, '', '340,147 385,130 392,150 405,175 430,190 450,185 485,220'],
  ['se', '#333', 3, '', '340,147 310,170 280,220 262,260 258,330 260,400 270,470 285,520'],
  ['se', '#888', 4, '', '250,445 200,430 215,400 200,375 235,370'],
  ['se', '#777', 5, '', '180,555 180,620 150,665 125,700 120,733'],
  ['se', '#999', 4, '6 4', '210,733 220,680 240,640 275,590'],
  ['se', '#bbb', 3, '5 4', '200,555 215,620 200,640'],
  ['se', '#666', 4, '8 3', '0,655 60,690 120,705 200,730'],
  ['se', '#ccc', 3, '3 4', '10,590 60,570 90,590 60,560 20,555'],
  ['se', '#ddd', 2, '', '400,585 430,630 450,680 475,733'],
  ['se', '#333', 5, '', '315,555 335,542 350,558'],
];

/* Hill shading: faint specks scattered around the valleys. */
const relief: [number, number, number, number, number][] = [
  [170, 210, 70, 90, 90], [430, 200, 70, 80, 70], [660, 220, 60, 40, 60], [60, 470, 40, 120, 70], [150, 530, 70, 50, 60],
  [660, 400, 40, 60, 50], [1090, 200, 120, 50, 80], [1040, 560, 90, 60, 70], [1130, 620, 80, 60, 70], [1260, 540, 60, 60, 60],
  [55, 840, 30, 110, 70], [270, 900, 50, 90, 60], [130, 1100, 110, 60, 60], [340, 1230, 80, 70, 110], [470, 1090, 120, 50, 80],
  [560, 1230, 110, 60, 90], [250, 1330, 130, 60, 80], [110, 1240, 70, 100, 60], [730, 1320, 90, 80, 70], [930, 1290, 100, 60, 80],
  [1110, 1310, 70, 70, 70], [1270, 1370, 90, 50, 60], [590, 1060, 70, 60, 50], [1390, 700, 60, 60, 50],
];
const specks = relief.map(([cx, cy, rx, ry, n], k) => range(1, n, 1).map(i => {
  const a = i * 2.39996 + k, r = Math.sqrt(i / n) * (1 + .25 * Math.sin(i * 7.1 + k));
  return `M${(cx + Math.cos(a) * rx * r).toFixed(0)} ${(cy + Math.sin(a) * ry * r).toFixed(0)}l${(3 + Math.sin(i * 3) * 3).toFixed(1)} ${(Math.cos(i * 5) * 4).toFixed(1)}`;
}).join('')).join('');

const farms: [Sheet, string][] = [
  ['nw', '732,357 736,377 758,407 601,427 561,469 354,514 620,532 612,548 767,523 773,568 717,617 583,620 600,610 623,608 597,633 606,633 618,633 553,670 562,686 333,699 652,653 659,668 678,697 712,697 811,562 820,547 847,537 858,512 877,513 835,573 850,580 861,570 780,588 772,603 760,610 775,622 806,588 832,588 815,615 867,604 882,592 840,634 865,642 845,662 886,658 787,648 803,648 755,662 767,673 783,673 800,678 817,668 784,692 796,684 819,685 883,435'],
  ['ne', '32,282 34,444 37,468 39,492 39,510 5,515 20,515 22,537 68,552 72,603 43,658 61,658 93,687 155,692 163,689 68,721'],
  ['sw', '817,28 800,40 810,55 835,47 843,55 858,65 870,68 888,70 881,54 699,64 552,97 587,108 561,118 565,144 629,153 646,159 640,177 652,177 656,188 683,144 695,147 776,131 880,108 870,120 895,115 893,130 876,142 848,177 897,162 873,168 887,177 468,160 482,172 466,175 483,188 505,185 513,211 558,182 564,197 551,202 543,230 497,238 487,241 486,260 459,277 496,310 540,310 543,272 543,325 542,345 551,339 568,264 583,243 594,270 604,252 618,246 624,286 662,233 677,246 714,216 703,234 740,218 752,198 769,200 765,212 813,216 720,232 747,230 760,235 783,232 732,242 703,252 748,257 715,262 765,250 793,257 815,243 770,266 808,266 785,275 826,272 853,262 883,251 880,270 692,273 712,272 729,272 745,282 763,295 838,288 837,304 883,304 700,326 716,318 735,321 783,321 777,334 697,355 714,365 743,366 816,378 677,443 719,450 725,458 688,472 686,495 676,507 692,516 682,527 714,545 750,521 794,526 842,512 785,468 848,444 862,438 876,457'],
  ['se', '18,72 120,68 105,80 135,78 152,86 128,130 280,41 291,47 320,68 342,80 54,103 35,107 15,118 20,130 5,142 35,138 28,160 57,152 52,165 64,163 17,176 218,122 210,130 212,135 221,158 186,170 128,195 92,202 80,215 45,221 100,238 92,228 64,256 80,257 34,267 202,270 182,320 232,369 123,285 134,298 143,303 114,313 108,325 127,330 152,336 140,343 98,349 37,363 58,356 75,357 88,357 95,378 41,413 34,437 63,438 88,432 103,436 90,452 78,458 115,443 147,425 140,410 168,397 172,430 133,437 132,460 147,470 153,484 141,480 183,490 115,491 170,532 227,535 246,507'],
];

/* x, y (baseline), size, text, width, style flags: b bold, i italic, g light grey, m middle grey, s spaced */
const places: [number, number, number, string, number, string][] = [
  [140, 355, 8, 'Arles', 18, ''], [131, 364, 8, 'sur-Tech)', 35, ''],
  [233, 354.500, 10, 'Ceret', 27, 'b'], [233, 364, 8, '(Céret)', 26, ''],
  [284, 361, 8, 'el Portus', 33, ''], [274, 370, 8, '(Le Perthus)', 43, ''],
  [349, 338.500, 10, 'Puig Neulós', 58, 'mb'], [359, 348, 8, '1257', 18, 'm'],
  [196, 397, 10, 'Roc de Frausa', 68, 'mb'], [329, 381, 8, 'Coll del Pertús', 55, 'im'],
  [329, 404, 8, 'la Jon', 19, ''], [131, 423, 8, 'ç de Cerdans', 50, ''], [131, 434, 8, 'nt-de-Cerdan', 52, ''],
  [207, 472, 8, 'de', 10, 'im'], [194, 524, 8, 'Albai', 20, ''],
  [446, 332, 8, '(Port-Vendres)', 53, ''], [510, 336, 8, 'Banyuls de la Marenda', 85, ''], [509, 345, 8, '(Banyuls-sur-Mer)', 69, ''],
  [500, 378, 8, 'Cervera', 28, ''], [494, 387, 8, '(Cerbère)', 36, ''], [544, 388, 9.500, 'Cap de Cervera', 72, 'ig'],
  [538, 405, 8, 'Portbou', 30, ''], [527, 463, 8, 'Llançà', 23, ''], [647, 500, 9.500, 'Cap de', 35, 'ig'],
  [615, 541, 8, 'Cadaqués', 37, ''], [608, 581, 8.500, 'Cap Norfeu', 46, 'ig'],
  [162, 599, 8, 'Argelaguer', 40, ''], [177, 626, 8, 'Besalú', 25, ''], [240, 648, 8, 'Serinya', 28, ''],
  [190, 662, 10, 'PLA DE L\'ESTANY', 126, 'mbs'], [252, 671, 8, 'Fontcoberta', 45, ''], [256, 694, 10.500, 'Banyoles', 45, 'b'],
  [209, 696, 8, 'Estany', 26, 'im'], [188, 704, 8, 'de Banyoles', 47, 'im'], [232, 710, 8, 'Mata', 17, ''], [212, 718, 8, '(Porqueres)', 38, ''],
  [176, 729.500, 9.500, 'Puigsou', 39, 'mb'], [199, 739, 8, '992', 14, 'mb'], [290, 720, 8, 'Cornellà', 30, ''], [290, 728, 7, 'del Terri', 26, ''],
  [424, 754, 8, 'Verges', 25, ''], [505, 739, 8, 'MASSÍS', 28, 'im'], [494, 747, 8, 'DEL MONTGRÍ', 50, 'im'],
  [511, 617, 11.500, 'Golf de Roses', 95, 'ibgs'], [500, 635, 8, 'Pere Pescador', 52, ''], [511, 685, 8, 'l\'Escala', 28, ''], [503, 673, 5.500, 'l\'Armentera-Empúries', 46, 'm'],
  [133, 678, 9, 'au', 8, 'm'], [133, 706, 11, 'A', 8, 'mb'], [455, 475, 12, 'D', 9, 'bg'], [474, 475, 12, 'À', 8, 'bg'], [541, 505, 5, 'Sant Pere', 12, 'm'],
];

const eastings = ['470000.000', '480000.000', '490000.000', '500000.000', '510000.000', '520000.000', '530000.000'];
const northings = ['4700000.000', '4690000.000', '4680000.000', '4670000.000', '4660000.000'];

const LayoutCanvas = () => (
  <svg width="825" height="816" viewBox="61 138 825 816">
    <defs>
      <pattern id="grid" x="100.300" y="280.300" width="12.345" height="12.345" patternUnits="userSpaceOnUse">
        <path d="M6.200 4.700v3M4.700 6.200h3" stroke="#d4d4d4" strokeWidth="1" />
      </pattern>
      <clipPath id="frame"><rect x="131" y="323" width="580" height="432" /></clipPath>
      <g id="farm"><circle r="13.500" fill="#3a22cc" /><path d="M-7 8V-3L0-9l7 6V8z" fill="#f2e22a" /><path d="M-2.500 8V1h5v7z" fill="#a79e62" /></g>
    </defs>
    <rect x="61" y="138" width="825" height="816" fill="#d7d7d7" />
    <rect x="112" y="292" width="734" height="519" fill="#989898" />
    <rect x="106" y="286" width="734" height="519" fill="#fff" />
    <rect x="106" y="286" width="734" height="519" fill="url(#grid)" />

    <rect x="131" y="323" width="580" height="432" fill="#fff" />
    <g clipPath="url(#frame)">
      <g transform="translate(120 280) scale(.33333)" strokeLinejoin="round" fill="none">
        <path d={specks} stroke="#ddd" strokeWidth="2.500" />
        {lines.map(([s, c, w, dash, d], i) => <path key={i} d={shape(s, d, false, .18)} stroke={c} strokeWidth={w} strokeDasharray={dash || undefined} />)}
        {areas.map(([s, c, d], i) => <path key={i} d={shape(s, d, true)} fill={c === 5 ? 'none' : shades[c]} stroke="#444" strokeWidth="2.600" />)}
        {lines.filter(l => l[0] === 'ne').map(([s, c, w, dash, d], i) => <path key={i} d={shape(s, d, false, .18)} stroke={c} strokeWidth={w * .8} strokeDasharray={dash || undefined} />)}
      </g>
      {places.map(([x, y, size, t, w, f], i) => (
        <text key={i} x={x} y={y} fontSize={size} textLength={w} lengthAdjust={f.includes('s') ? 'spacing' : 'spacingAndGlyphs'} fontFamily="'Noto Sans', sans-serif"
          fontWeight={f.includes('b') ? 600 : 400} fontStyle={f.includes('i') ? 'italic' : 'normal'} fill={f.includes('g') ? '#a0a0a0' : f.includes('m') ? '#999' : '#555'}>{t}</text>
      ))}
      <g fontFamily="'Noto Sans', sans-serif" fontWeight="600" fill="#666" fontSize="9">
        <text transform="translate(351 366) rotate(6)" textLength="32">SERRA</text><text x="393" y="372" textLength="11" fontSize="8.500">DE</text><text x="453" y="370" textLength="12" fontSize="8.500">RA</text>
      </g>
      <g fontFamily="'Noto Sans', sans-serif" fontStyle="italic" fill="#888" fontSize="12">
        <text transform="translate(675 655) rotate(-90)">A</text><text transform="translate(674 706) rotate(-90)">V</text><text transform="translate(671 757) rotate(-90)">A</text>
        <text transform="translate(308 384) rotate(85)" fontSize="7">Tres</text>
      </g>
      <path d="M190.500 740l3-5 3 5z" fill="#888" />
      <g fill="#666"><circle cx="242" cy="342" r="1.200" /><circle cx="161" cy="601" r="1.300" /><circle cx="203" cy="618" r="1.300" /><circle cx="237" cy="644" r="1.300" /><circle cx="271" cy="673" r="1.300" /><circle cx="254" cy="707" r="1.300" /><circle cx="285" cy="720" r="1.300" /><circle cx="635" cy="526" r="1" /></g>
      <g stroke="#222" strokeWidth="1" shapeRendering="crispEdges">
        {range(0, 6, 1).map(i => range(0, 4, 1).map(j => {
          const x = 157.5 + i * 86, y = 375.500 + j * 86;
          return <path key={`${i}-${j}`} d={`M${x - 7.5} ${y}h15M${x} ${y - 7.5}v15`} />;
        }))}
      </g>
      <g transform="translate(120 280) scale(.33333)">
        {farms.map(([s, d]) => parse(s, d).map(([x, y], i) => <use key={`${s}${i}`} href="#farm" x={x} y={y} />))}
      </g>
    </g>
    <rect x="131" y="323" width="580" height="432" fill="none" stroke="#000" strokeWidth="1.800" />
    <g fontSize="7.500" textAnchor="middle" fontFamily="'DejaVu Sans', sans-serif" fill="#000" stroke="#000" strokeWidth=".15">
      {eastings.map((t, i) => [321, 763].map(y => <text key={t + y} x={157 + i * 86} y={y} textLength="38" lengthAdjust="spacingAndGlyphs">{t}</text>))}
      {northings.map((t, i) => (
        <g key={t}>
          <text transform={`translate(123 ${376 + i * 86}) rotate(90)`} textLength="42" lengthAdjust="spacingAndGlyphs">{t}</text>
          <text transform={`translate(718 ${376 + i * 86}) rotate(-90)`} textLength="42" lengthAdjust="spacingAndGlyphs">{t}</text>
        </g>
      ))}
    </g>

    <rect x="719.500" y="612.500" width="102.500" height="142.500" fill="#fff" stroke="#666" strokeWidth="1.200" />
    <text x="723" y="631" fontSize="14" fontFamily="'Noto Sans', sans-serif" fontWeight="300" textLength="55" lengthAdjust="spacingAndGlyphs">Llegenda</text>
    <use href="#farm" transform="translate(733 647) scale(.36)" />
    <g fontSize="10">
      <text x="746" y="652" textLength="32" lengthAdjust="spacing">Grange</text>
      <text x="723" y="670" textLength="58" lengthAdjust="spacing">Kg. Nitrògen</text>
      {['12 - 11278', '11278 - 23600', '23600 - 40576', '40576 - 71976', '71976 - 97322'].map((t, i) => (
        <g key={t}>
          <rect x="724.500" y={676.500 + i * 16.100} width="17.500" height="10" fill={shades[i]} stroke="#666" />
          <text x="745.500" y={685 + i * 16.200} textLength={i ? 67 : 50} lengthAdjust="spacing">{t}</text>
        </g>
      ))}
    </g>
  </svg>
);

/* ---------- panels ---------- */
const Dock = () => (
  <DockButtons>
    <svg width="12" height="12" viewBox="0 0 12 12" fill="none" stroke="#666"><rect x=".8" y=".8" width="10.400" height="10.400" rx="1.500" /><rect x="5" y="2.800" width="4" height="4" /><rect x="3" y="5" width="4" height="4" fill="#efefef" /></svg>
    <svg width="12" height="12" viewBox="0 0 12 12" fill="none" stroke="#666"><rect x=".8" y=".8" width="10.400" height="10.400" rx="1.500" /><path d="M3.200 3.200l5.600 5.600M8.800 3.200L3.200 8.800" stroke="#444" strokeWidth="2" /></svg>
  </DockButtons>
);
const Tick = () => <svg width="12" height="12" viewBox="0 0 12 12" fill="none"><path d="M2.500 5.500l2.700 4L9.500 2" stroke="#000" strokeWidth="2" /></svg>;

const menus: [string, string, number][] = [['L', 'ayout', 50], ['E', 'dit', 34], ['V', 'iew', 39], ['I', 'tems', 43], ['A', 'dd Item', 63], ['', 'Atlas', 40.500], ['', 'Settings', 50]];
const sideTools: [React.FC, ('on' | 'hover')?][] = [
  [Hand], [ZoomTool], [Select, 'on'], [MoveContent], [EditNodes], [AddMap], [Add3d], [AddPicture], [AddLabel], [AddLegend],
  [AddScale, 'hover'], [AddNorth], [AddShape], [AddArrow], [AddNode], [AddHtml], [AddTable],
];
const Buttons = ({ icons, off }: { icons: React.ReactElement[]; off?: boolean }) => (
  <>{icons.map((ic, i) => <ToolButton key={i} $disabled={off}>{ic}</ToolButton>)}</>
);

export default function App() {
  return (
    <>
      <Global />
      <Window>
        <TitleBar>
          <Logo /><TitleText $sp={-.05}>*Producció nitrògen per municipis</TitleText>
          <WindowButtons>
            <svg width="11" height="11" viewBox="0 0 11 11"><path d="M0 6.500h10" stroke="#111" /></svg>
            <svg width="11" height="11" viewBox="0 0 11 11" fill="none" stroke="#111"><path d="M.5 2.500h7v7h-7zM2.500 2.500v-2h7.500v7.500H8" /></svg>
            <svg width="12" height="12" viewBox="0 0 12 12"><path d="M1 1l10 10M11 1L1 11" stroke="#111" strokeWidth="1.200" /></svg>
          </WindowButtons>
        </TitleBar>
        <MenuBar>{menus.map(([u, t, w]) => <MenuItem key={t} $w={w}><u>{u}</u>{t}</MenuItem>)}</MenuBar>
        <ToolBar $h={39}>
          <Grip />
          <Buttons icons={[<Floppy />]} /><Divider />
          <Buttons icons={[<NewLayout />, <Duplicate />, <Manager />, <Folder />, <Floppy edit />]} /><Divider />
          <Buttons icons={[<PageAdd />]} /><Divider />
          <Buttons icons={[<Printer />, <ExportImage />, <ExportSvg />, <ExportPdf />, <Undo />, <Redo />]} />
          <Grip $gap={8} />
          <Buttons off icons={[<AtlasMap />, <Arrow bar />, <Arrow />]} />
          <Combo $w={66} $h={30} $off><ComboText>1</ComboText><ComboArrow $off /></Combo>
          <Buttons off icons={[<Arrow flip />, <Arrow bar flip />, <Printer off />]} />
          <Buttons icons={[<ExportAtlas />, <AtlasSettings />]} />
        </ToolBar>
        <ToolBar $h={38}>
          <Grip />
          <Buttons icons={[<ZoomIn />, <ZoomOut />, <ZoomOne />, <ZoomFull />, <Refresh />]} />
          <Grip $gap={8} />
          <Buttons icons={[<Lock />, <Lock open />, <Group />, <Ungroup />, <Raise />, <Align />, <Distribute />, <Resize />]} />
        </ToolBar>
        <Main>
          <SideBar>
            <SideGrip />
            {sideTools.map(([Icon, state], i) => <SideButton key={i} $state={state}><Icon /></SideButton>)}
            <Tooltip>Adds a new Scale Bar to the layout</Tooltip>
          </SideBar>
          <Work>
            <WorkRow><HRuler /></WorkRow>
            <WorkRow><VRuler /><LayoutCanvas /></WorkRow>
          </Work>
          <Panel>
            <PaneHandle />
            <PanelBody>
              <DockTitle $h={20} $top={1}><Caption $sp={-.2}>Items</Caption><Dock /></DockTitle>
              <Tree>
                <TreeRow $head>
                  <Cell $w={36} $line $pad={3}><svg width="15" height="11" viewBox="0 0 15 11"><path d="M0 5.500Q7.500-2.500 15 5.500 7.500 13.500 0 5.500z" fill="#eee" stroke="#999" /><circle cx="7.500" cy="5.500" r="3.500" fill="#888" /><circle cx="7.500" cy="5.500" r="1.500" fill="#111" /></svg></Cell>
                  <Cell $w={36} $line $pad={4}><svg width="13" height="15" viewBox="0 0 13 15"><path d="M3 8V4.500q0-3 3.500-3t3.500 3V8" fill="none" stroke="#888" strokeWidth="1.700" /><rect x=".5" y="7" width="12" height="8" rx="1" fill="#606060" /></svg></Cell>
                  <Cell $pad={1}><RowText $low>Item</RowText></Cell>
                </TreeRow>
                <TreeRow>
                  <Cell $w={36} $pad={3}><Check><Tick /></Check></Cell><Cell $w={36} $pad={3}><Check /></Cell>
                  <Cell $pad={4}><svg width="14" height="14" viewBox="0 0 14 14" fill="none"><g stroke="#555"><rect x=".8" y=".8" width="2.500" height="2.500" /><rect x=".8" y="5.600" width="2.500" height="2.500" /><rect x=".8" y="10.400" width="2.500" height="2.500" /></g><path d="M5 2.500h6M5 7h9M5 12h4" stroke="#aaa" strokeWidth="1.400" /></svg><RowText>Llegenda</RowText></Cell>
                </TreeRow>
                <TreeRow $alt>
                  <Cell $w={36} $pad={3}><Check><Tick /></Check></Cell><Cell $w={36} $pad={3}><Check /></Cell>
                  <Cell $pad={4}><svg width="14" height="14" viewBox="0 0 14 14"><rect x=".5" y="1.500" width="13" height="11" fill="#a4c5e3" stroke="#5b8fbd" /><path d="M3 2v10" stroke="#6f9cc6" strokeWidth="2" /></svg><RowText>Map 1</RowText></Cell>
                </TreeRow>
              </Tree>
              <Splitter />
              <Tabs><Tab $w={57}>Layout</Tab><Tab $w={98} $on>Item Properties</Tab></Tabs>
              <DockTitle $h={19}><Caption $sp={-.25}>Item Properties</Caption><Dock /></DockTitle>
            </PanelBody>
          </Panel>
        </Main>
        <Status>
          <StatusText $w={106}>x: 0 mm</StatusText><StatusText $w={106}>y: -38 mm</StatusText><StatusText $w={107}>page: 1</StatusText>
          <Combo $w={108} $h={22}><ComboText>65.4%</ComboText><ComboArrow /></Combo>
          <Slider />
        </Status>
      </Window>
    </>
  );
}
